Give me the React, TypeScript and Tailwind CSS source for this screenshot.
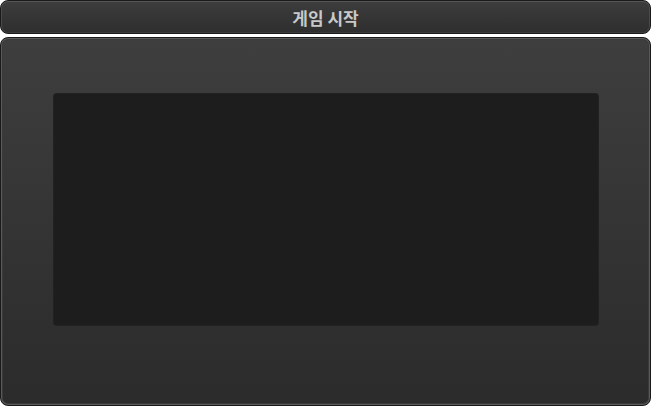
import React from "react";

export default function App() {
  return (
    <div className="w-[651px] h-[406px] bg-white flex flex-col gap-[3px] p-0" style={{ fontFamily: '"Noto Sans", "Noto Sans CJK KR", sans-serif' }}>
      <div className="h-[34px] rounded-[8px] border border-[#1a1a1a] bg-gradient-to-b from-[#3d3d3d] to-[#2e2e2e] shadow-[inset_0_1px_0_#555,inset_1px_0_0_#4a4a4a,inset_-1px_0_0_#4a4a4a,inset_0_-1px_0_#3a3a3a] flex items-center justify-center">
        <span className="text-[17px] font-bold text-[#c9c9c9] leading-none" style={{ fontFamily: '"Noto Sans CJK KR", sans-serif' }}>게임 시작</span>
      </div>
      <div className="flex-1 rounded-[8px] border border-[#1a1a1a] bg-gradient-to-b from-[#3e3e3e] to-[#2b2b2b] shadow-[inset_0_0_0_1px_#5a5a5a,inset_0_0_0_2px_#3a3a3a] pl-[53px] pr-[52px] pt-[56px] pb-[80px] flex">
        <div className="flex-1 rounded-[3px] bg-[#1d1d1d] shadow-[0_0_0_1px_#222]" />
      </div>
    </div>
  );
}
